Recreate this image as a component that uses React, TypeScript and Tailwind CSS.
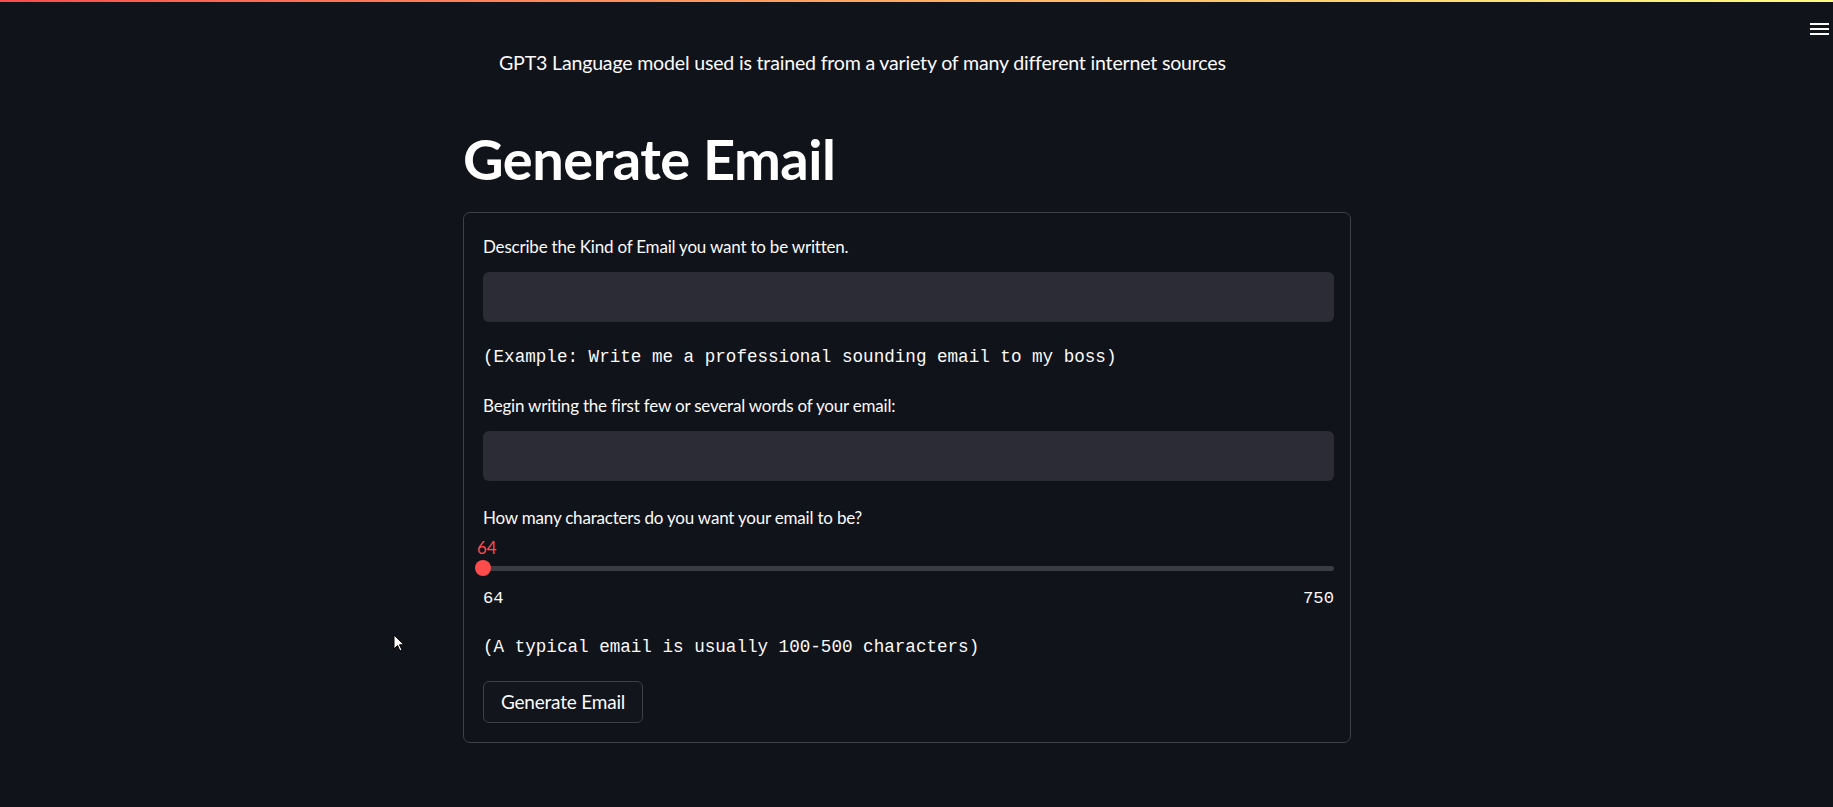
import React from 'react';

const sans = { fontFamily: 'Lato, "Noto Sans", sans-serif' };
const mono = { fontFamily: '"Liberation Mono", "DejaVu Sans Mono", monospace' };

const Field: React.FC<{ label: string; gapTop: string }> = ({ label, gapTop }) => (
    <>
        <div className={`${gapTop} h-6 flex items-center text-[17px] text-[#fafafa] tracking-[-0.2px]`} style={sans}>
            {label}
        </div>
        <div className="mt-[13px] h-[50px] rounded-md bg-[#2b2c36]" />
    </>
);

const App: React.FC = () => {
    return (
        <div className="relative min-h-[807px] w-full bg-[#11131a] text-[#fafafa] overflow-hidden">
            {/* streamlit decoration bar */}
            <div className="h-[2px] w-full bg-gradient-to-r from-[#ff4b4b] to-[#fffd80]" />

            <button className="absolute right-[4px] top-[23px] flex flex-col gap-[3px] w-[19px]">
                <span className="block h-[2px] w-full bg-[#fafafa]" />
                <span className="block h-[2px] w-full bg-[#fafafa]" />
                <span className="block h-[2px] w-full bg-[#fafafa]" />
            </button>

            <div className="ml-[463px] w-[888px]">
                <p className="mt-[49px] ml-[36px] h-6 flex items-center text-[19.6px] tracking-[-0.2px]" style={sans}>
                    GPT3 Language model used is trained from a variety of many different internet sources
                </p>

                <h1 className="mt-[54px] h-[60px] flex items-center text-[56px] font-bold tracking-[-0.5px] text-white" style={sans}>
                    Generate Email
                </h1>

                <form className="mt-[23px] border border-[#3d4048] rounded-[7px] pl-[19px] pr-[16px] pt-[22px] pb-[19px]">
                    <Field label="Describe the Kind of Email you want to be written." gapTop="mt-0" />
                    <div className="mt-[23px] h-6 flex items-center text-[17.6px] whitespace-pre" style={mono}>
                        (Example: Write me a professional sounding email to my boss)
                    </div>

                    <Field label="Begin writing the first few or several words of your email:" gapTop="mt-[25px]" />

                    <div className="mt-[25px] h-6 flex items-center text-[17px] tracking-[-0.2px]" style={sans}>
                        How many characters do you want your email to be?
                    </div>

                    {/* slider */}
                    <div className="mt-[8px] h-5 flex items-center text-[17px] text-[#ff4b4b] -ml-[6px]" style={sans}>
                        64
                    </div>
                    <div className="mt-[2px] h-4 flex items-center relative">
                        <div className="h-[5px] w-full rounded-full bg-[#3b3d45]" />
                        <div className="absolute left-[-8px] top-0 h-4 w-4 rounded-full bg-[#ff4b4b]" />
                    </div>
                    <div className="mt-[13px] h-5 flex items-center justify-between text-[17.2px]" style={mono}>
                        <span>64</span>
                        <span>750</span>
                    </div>

                    <div className="mt-[26px] h-6 flex items-center text-[17.6px] whitespace-pre" style={mono}>
                        (A typical email is usually 100-500 characters)
                    </div>

                    <button
                        type="button"
                        className="mt-[22px] h-[42px] w-[160px] flex items-center justify-center rounded-md border border-[#3d4048] bg-[#13151c] text-[19px] tracking-[-0.2px]"
                        style={sans}
                    >
                        Generate Email
                    </button>
                </form>
            </div>

            {/* mouse cursor */}
            <svg className="absolute left-[393px] top-[634px]" width="12" height="19" viewBox="0 0 12 19">
                <path d="M1 1 L1 15 L4.5 11.5 L7 17 L9 16 L6.5 10.8 L11 10.8 Z" fill="#ffffff" stroke="#000000" strokeWidth="1" />
            </svg>
        </div>
    );
};

export default App;
